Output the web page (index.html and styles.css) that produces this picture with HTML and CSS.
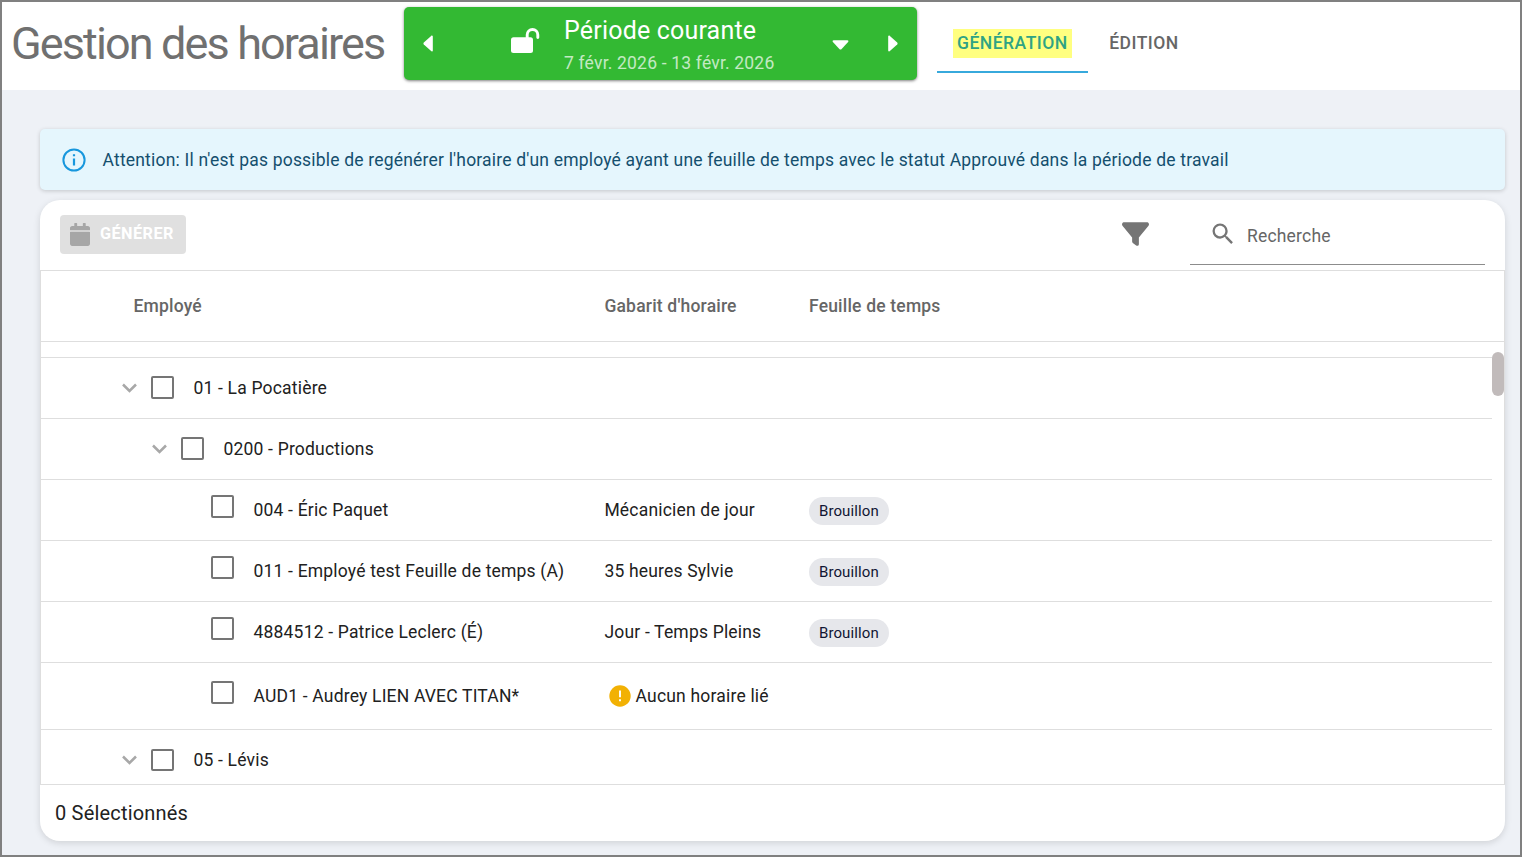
FILE: index.html
```html
<!DOCTYPE html>
<html lang="fr">
<head>
    <meta charset="UTF-8">
    <meta name="viewport" content="width=device-width, initial-scale=1.0">
    <title>Gestion des horaires</title>
    <link rel="stylesheet" href="styles.css">
</head>
<body>
    <header class="topbar">
        <h1>Gestion des horaires</h1>
        <div class="period">
            <svg class="caret-left" viewBox="0 0 10 17"><path d="M9.8 1.6v13.8c0 1-1 1.3-1.7.7L.8 9.4c-.5-.5-.5-1.3 0-1.8L8.1.9c.7-.6 1.7-.3 1.7.7z"/></svg>
            <svg class="lock" viewBox="0 0 29 25"><rect y="9.300" width="22" height="15.700" rx="2.500"/><path d="M16.200 10.500V6.800a5.300 5.300 0 0 1 10.600 0v2.700" fill="none" stroke="#fff" stroke-width="2.900" stroke-linecap="round"/></svg>
            <div class="period-text">
                <span class="period-name">Période courante</span>
                <span class="period-dates">7 févr. 2026 - 13 févr. 2026</span>
            </div>
            <svg class="caret-down" viewBox="0 0 17 10"><path d="M1.6.2h13.800c1 0 1.300 1 .7 1.700L9.400 9.200c-.5.5-1.300.5-1.800 0L.9 1.900C.3 1.200.6.2 1.600.2z"/></svg>
            <svg class="caret-right" viewBox="0 0 10 17"><path d="M.2 1.600v13.800c0 1 1 1.300 1.700.7l7.300-6.700c.5-.5.5-1.300 0-1.800L1.900.9C1.200.3.2.6.2 1.600z"/></svg>
        </div>
        <nav class="tabs">
            <a class="tab active"><span>GÉNÉRATION</span></a>
            <a class="tab"><span>ÉDITION</span></a>
        </nav>
    </header>

    <main>
        <div class="alert">
            <svg viewBox="0 0 24 24"><circle cx="12" cy="12" r="10.600" fill="none" stroke="#1797dd" stroke-width="2"/><path d="M10.900 6.300h2.200v2h-2.200zM10.900 10.500h2.200v7h-2.200z" fill="#1797dd"/></svg>
            <span>Attention: Il n'est pas possible de regénérer l'horaire d'un employé ayant une feuille de temps avec le statut Approuvé dans la période de travail</span>
        </div>

        <section class="card">
            <div class="toolbar">
                <button type="button" class="generate" disabled>
                    <svg viewBox="0 0 448 512"><path d="M12 192h424c6.600 0 12 5.400 12 12v260c0 26.500-21.500 48-48 48H48c-26.500 0-48-21.500-48-48V204c0-6.600 5.400-12 12-12zm436-44v-36c0-26.500-21.500-48-48-48h-48V12c0-6.600-5.400-12-12-12h-40c-6.600 0-12 5.400-12 12v52H160V12c0-6.600-5.400-12-12-12h-40c-6.600 0-12 5.400-12 12v52H48C21.500 64 0 85.500 0 112v36c0 6.600 5.400 12 12 12h424c6.600 0 12-5.400 12-12z"/></svg>
                    <span>GÉNÉRER</span>
                </button>
                <svg class="filter" viewBox="0 32 512 448"><path d="M3.900 54.900C10.500 40.900 24.500 32 40 32H472c15.500 0 29.500 8.900 36.100 22.900s4.600 30.500-5.200 42.500L320 320.900V448c0 12.100-6.800 23.200-17.700 28.600s-23.800 4.300-33.500-3l-64-48c-8.100-6-12.800-15.500-12.800-25.500V320.900L9 97.300C-.7 85.400-2.800 68.800 3.900 54.900z"/></svg>
                <label class="search">
                    <svg viewBox="0 0 24 24"><path d="M9.500 3A6.500 6.500 0 0 1 16 9.500c0 1.610-.59 3.090-1.560 4.230l.27.270h.79l5 5-1.500 1.500-5-5v-.79l-.27-.27A6.516 6.516 0 0 1 9.500 16a6.500 6.500 0 0 1 0-13m0 2C7 5 5 7 5 9.500S7 14 9.500 14 14 12 14 9.500 12 5 9.500 5z"/></svg>
                    <input type="text" placeholder="Recherche">
                </label>
            </div>

            <div class="table">
                <div class="table-head">
                    <span>Employé</span>
                    <span>Gabarit d'horaire</span>
                    <span>Feuille de temps</span>
                </div>
                <div class="table-body">
                    <div class="rows">
                        <div class="row cut"></div>
                        <div class="row">
                            <div class="name level1"><svg viewBox="0 0 15 10"><path d="M1 1.500l6.500 6.500L14 1.500"/></svg><i class="check"></i><span>01 - La Pocatière</span></div>
                        </div>
                        <div class="row">
                            <div class="name level2"><svg viewBox="0 0 15 10"><path d="M1 1.500l6.500 6.500L14 1.500"/></svg><i class="check"></i><span>0200 - Productions</span></div>
                        </div>
                        <div class="row">
                            <div class="name level3"><i class="check"></i><span>004 - Éric Paquet</span></div>
                            <span>Mécanicien de jour</span>
                            <span class="chip">Brouillon</span>
                        </div>
                        <div class="row">
                            <div class="name level3"><i class="check"></i><span>011 - Employé test Feuille de temps (A)</span></div>
                            <span>35 heures Sylvie</span>
                            <span class="chip">Brouillon</span>
                        </div>
                        <div class="row">
                            <div class="name level3"><i class="check"></i><span>4884512 - Patrice Leclerc (É)</span></div>
                            <span>Jour - Temps Pleins</span>
                            <span class="chip">Brouillon</span>
                        </div>
                        <div class="row tall">
                            <div class="name level3"><i class="check"></i><span>AUD1 - Audrey LIEN AVEC TITAN*</span></div>
                            <span class="warning"><svg viewBox="0 0 22 22"><circle cx="11" cy="11" r="10.700" fill="#f2b104"/><path d="M11 5.500v6.700M11 14.300v2" stroke="#fff" stroke-width="1.900"/></svg>Aucun horaire lié</span>
                        </div>
                        <div class="row last">
                            <div class="name level1"><svg viewBox="0 0 15 10"><path d="M1 1.500l6.500 6.500L14 1.500"/></svg><i class="check"></i><span>05 - Lévis</span></div>
                        </div>
                    </div>
                    <div class="scrollbar"><div class="thumb"></div></div>
                </div>
            </div>

            <footer class="card-footer">0 Sélectionnés</footer>
        </section>
    </main>
</body>
</html>
```
FILE: styles.css
```css
* {
    box-sizing: border-box;
}

body {
    margin: 0;
    height: 857px;
    border: 2px solid #808080;
    background-color: #eef1f6;
    font-family: Roboto, sans-serif;
    font-size: 17.5px;
    letter-spacing: 0.19px;
    color: #212121;
    overflow: hidden;
}

svg {
    display: block;
    flex: none;
}

/* top bar */
.topbar {
    display: flex;
    align-items: flex-start;
    height: 88px;
    background-color: #fff;
}

h1 {
    width: 402px;
    margin: 0;
    padding-left: 9px;
    font-size: 45px;
    font-weight: 400;
    line-height: 84px;
    letter-spacing: -1.88px;
    color: #707070;
    white-space: nowrap;
}

.period {
    display: flex;
    align-items: center;
    width: 513px;
    height: 73px;
    margin-top: 5px;
    padding-left: 19px;
    border-radius: 5px;
    background-color: #33b933;
    box-shadow: 0 1px 3px rgba(0, 0, 0, 0.5);
    fill: #fff;
    color: #fff;
    white-space: nowrap;
}

.caret-left, .caret-right {
    width: 10px;
    height: 17px;
}

.caret-down {
    width: 17px;
    height: 10px;
    margin: 2px 39px 0 0;
}

.lock {
    width: 29px;
    height: 25px;
    margin: -7px 24px 0 78px;
}

.period-text {
    display: flex;
    flex-direction: column;
    width: 268px;
    padding-top: 6px;
}

.period-name {
    font-size: 25px;
    line-height: 32px;
}

.period-dates {
    font-size: 17.5px;
    line-height: 32px;
    opacity: 0.7;
}

.tabs {
    display: flex;
    margin-left: 20px;
}

.tab {
    height: 71px;
    padding: 27px 16px 0;
    font-weight: 500;
    letter-spacing: 0.5px;
    color: #666;
}

.tab span {
    display: block;
    height: 29px;
    padding: 0 4px;
    line-height: 28px;
}

.tab.active {
    border-bottom: 2px solid #37a9dc;
    color: #2fa384;
}

.tab.active span {
    background-color: #ffff80;
}

.tab + .tab {
    padding-left: 17.4px;
}

/* content */
main {
    padding: 39px 15px 0 38px;
}

.alert {
    display: flex;
    align-items: center;
    gap: 16.5px;
    height: 61px;
    padding-left: 22px;
    border-radius: 5px;
    background-color: #e5f6fd;
    box-shadow: 0 1px 4px rgba(0, 0, 0, 0.18);
    color: #144f6e;
    white-space: nowrap;
}

.alert svg {
    width: 24px;
    height: 24px;
}

.card {
    height: 641px;
    margin-top: 10px;
    border-radius: 20px;
    background-color: #fff;
    box-shadow: 0 2px 7px rgba(0, 0, 0, 0.13);
}

.toolbar {
    display: flex;
    align-items: flex-start;
    height: 70px;
    padding: 15px 20px 0;
}

.generate {
    display: flex;
    align-items: center;
    gap: 10px;
    width: 126px;
    height: 39px;
    padding: 0 0 0 10px;
    border: none;
    border-radius: 4px;
    background-color: #e0e0e0;
    color: #fff;
    font: 700 16.25px Roboto, sans-serif;
    letter-spacing: 0.45px;
}

.generate svg {
    width: 20px;
    height: 23px;
    fill: #a6a6a6;
}

.generate span {
    margin-top: -2px;
}

.filter {
    width: 27px;
    height: 24px;
    margin: 7px 41px 0 auto;
    fill: #757575;
}

.search {
    display: flex;
    align-items: center;
    width: 295px;
    height: 50px;
    padding-left: 19px;
    border-bottom: 1px solid #8c8c8c;
}

.search svg {
    width: 28px;
    height: 28px;
    margin-top: -11px;
    fill: #757575;
}

.search input {
    width: 220px;
    padding: 0;
    margin: -8px 0 0 10px;
    border: none;
    outline: none;
    background: none;
    font: 17.5px Roboto, sans-serif;
    letter-spacing: 0.19px;
}

.search input::placeholder {
    color: #666;
}

/* table */
.table {
    height: 515px;
    border: 1px solid #dedede;
}

.table-head, .row {
    display: grid;
    grid-template-columns: 563.4px 204.6px 1fr;
    align-items: center;
    border-bottom: 1px solid #dedede;
    white-space: nowrap;
}

.table-head {
    height: 71px;
    font-weight: 500;
    color: #666;
}

.table-head span:first-child {
    padding-left: 92.5px;
}

.table-body {
    display: flex;
    height: 442px;
    overflow: hidden;
}

.rows {
    flex: 1;
}

.row {
    height: 61px;
}

.row.cut {
    height: 16px;
}

.row.tall {
    height: 67px;
}

.name {
    display: flex;
    align-items: center;
}

.name svg {
    width: 15px;
    height: 10px;
    margin-right: 13.6px;
    fill: none;
    stroke: #a8a8a8;
    stroke-width: 2.5;
}

.check {
    width: 23px;
    height: 23px;
    margin-top: -2px;
    margin-right: 19.5px;
    border: 2px solid #757575;
    border-radius: 2px;
}

.last .check {
    height: 22px;
    margin-top: -1px;
}

.level1 {
    padding-left: 81.4px;
}

.level2 {
    padding-left: 111.4px;
}

.level3 {
    padding-left: 170px;
}

.level3 .check {
    margin-top: -8px;
}

.chip {
    justify-self: start;
    height: 28px;
    margin-top: 2px;
    padding: 0 10px;
    border-radius: 14px;
    background-color: #e6e7eb;
    font-size: 15px;
    line-height: 28px;
    letter-spacing: 0.1px;
    color: #111633;
}

.warning {
    display: flex;
    align-items: center;
    gap: 4.6px;
    padding-left: 4.6px;
}

.warning svg {
    width: 22px;
    height: 22px;
}

.scrollbar {
    width: 12px;
    padding-top: 10px;
}

.thumb {
    height: 44px;
    border-radius: 6px;
    background-color: #c1bbbb;
}

.card-footer {
    padding-left: 15px;
    font-size: 20px;
    line-height: 56px;
}
```
